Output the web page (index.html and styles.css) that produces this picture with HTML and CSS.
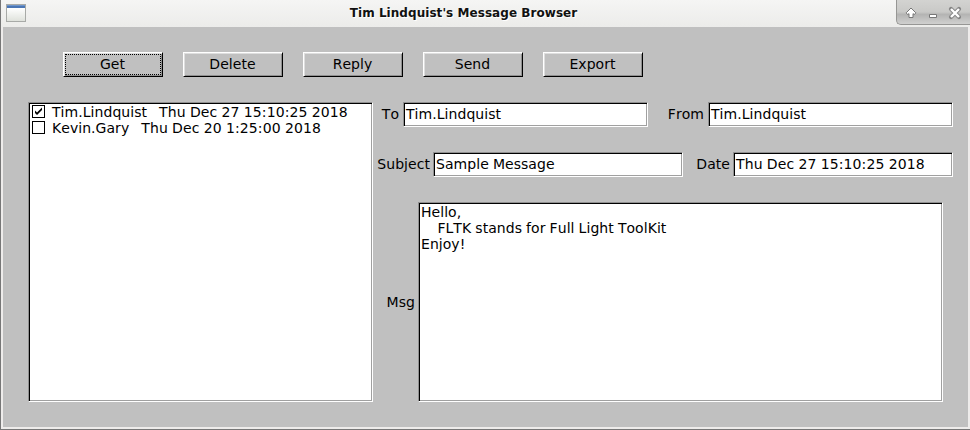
FILE: index.html
```
<!DOCTYPE html>
<html lang="en">
<head>
<meta charset="utf-8">
<title>Tim Lindquist's Message Browser</title>
<link rel="stylesheet" href="styles.css">
</head>
<body>
<div class="window">
  <header class="titlebar">
    <span class="app-icon"></span>
    <h1 class="title">Tim Lindquist's Message Browser</h1>
    <div class="controls">
      <svg width="74" height="25" viewBox="0 0 74 25" stroke-linejoin="round">
        <path d="M15 8l4.800 4.800-1.300 1.700-1.500-.8v3.800h-4v-3.800l-1.500.8-1.300-1.700z" fill="#fff" stroke="#777" stroke-width="1"/>
        <path d="M33.500 14.500h7v3h-7z" fill="#fff" stroke="#777" stroke-width="1"/>
        <path d="M55 9l8 8M63 9l-8 8" fill="none" stroke="#858585" stroke-width="4.200" stroke-linecap="round"/>
        <path d="M55 9l8 8M63 9l-8 8" fill="none" stroke="#fff" stroke-width="2.400"/>
      </svg>
    </div>
  </header>
  <main class="client">
    <nav class="toolbar">
      <button class="btn focused">Get</button>
      <button class="btn">Delete</button>
      <button class="btn">Reply</button>
      <button class="btn">Send</button>
      <button class="btn">Export</button>
    </nav>
    <div class="content">
      <ul class="sunken list">
        <li><span class="check"><svg width="11" height="11" viewBox="0 0 11 11"><path d="M2 4.500v2.500l2 2 5-5V1.500L4 6.500z" fill="#000"/></svg></span><span class="sender">Tim.Lindquist</span><span class="stamp">Thu Dec 27 15:10:25 2018</span></li>
        <li><span class="check"></span><span class="sender">Kevin.Gary</span><span class="stamp">Thu Dec 20 1:25:00 2018</span></li>
      </ul>
      <div class="details">
        <div class="row">
          <span class="label label-to">To</span><div class="sunken field field-person">Tim.Lindquist</div>
          <span class="label label-from">From</span><div class="sunken field field-person">Tim.Lindquist</div>
        </div>
        <div class="row">
          <span class="label label-subject">Subject</span><div class="sunken field field-subject">Sample Message</div>
          <span class="label label-date">Date</span><div class="sunken field field-date stamp">Thu Dec 27 15:10:25 2018</div>
        </div>
        <div class="row">
          <span class="label label-msg">Msg</span>
          <div class="sunken message">Hello,
    FLTK stands for Full Light ToolKit
Enjoy!</div>
        </div>
      </div>
    </div>
  </main>
</div>
</body>
</html>
```
FILE: styles.css
```
* { box-sizing: border-box; }
body { margin: 0; font: 14px/16px "DejaVu Sans", sans-serif; color: #000; font-kerning: none; letter-spacing: 0.05px; word-spacing: -0.4px; }
.window {
  width: 970px; height: 430px; overflow: hidden;
  display: flex; flex-direction: column;
  background: #eeeceb;
  border-left: 1px solid #777;
  border-bottom: 1px solid #777;
}
.titlebar {
  height: 27px; flex: none; display: flex; align-items: flex-start;
  background: linear-gradient(#f5f5f4, #ececea);
}
.app-icon {
  width: 20px; height: 18px; margin: 4px 0 0 5px; flex: none;
  border: 1px solid #a8aaa7;
  background: linear-gradient(#7096cb 0 1px, #4a76b5 1px 3px, #fff 3px, #dfe2dc);
}
.title {
  margin: 5px 0 0; flex: 1; padding-left: 5px;
  font-size: 12px; line-height: 16px; font-weight: bold;
  text-align: center; color: #111; text-shadow: 1px 1px #fff;
  word-spacing: 0;
}
.controls {
  width: 74px; height: 25px; flex: none;
  background: linear-gradient(#d3d3d1, #c9c9c7 50%, #b4b4b3 60%, #d0d0cf);
  border-left: 1px solid #969694; border-bottom: 1px solid #969694;
  border-bottom-left-radius: 5px;
}
.controls svg { display: block; margin-left: -1px; }
.client { height: 400px; width: 965px; margin-left: 2px; padding: 25px 0 0 25px; background: #c0c0c0; }
.toolbar { display: flex; gap: 20px; padding-left: 35px; }
.btn {
  width: 100px; height: 25px; padding: 0 1px 2px 0; font: inherit; color: #000;
  letter-spacing: inherit;
  background: #c0c0c0; border: 1px solid; border-color: #fff #000 #000 #fff;
  box-shadow: inset 1px 1px #dedede, inset -1px -1px #909090;
}
.focused { outline: 1px dotted #000; outline-offset: -3px; }
.content { display: flex; margin-top: 25px; }
.sunken {
  background: #fff; border: 1px solid; border-color: #909090 #fff #fff #909090;
  box-shadow: inset 1px 1px #000, inset -1px -1px #a0a0a0;
}
.list { width: 345px; height: 300px; margin: 0; padding: 1px 3px; list-style: none; }
.list li { display: flex; height: 16px; align-items: flex-start; white-space: pre; }
.check { width: 13px; height: 13px; margin: 1px 7px 0 0; border: 1px solid #000; flex: none; }
.check svg { display: block; }
.sender { margin-right: 12px; }
.stamp { letter-spacing: 0.12px; }
.details { display: flex; flex-direction: column; gap: 25px; }
.row { display: flex; align-items: center; }
.label { text-align: right; padding: 0 3px 1px 0; flex: none; white-space: nowrap; }
.label-to { width: 30px; padding-right: 4px; }
.label-from { width: 60px; padding-right: 4px; }
.label-subject { width: 60px; }
.label-date { width: 50px; }
.label-msg { width: 45px; }
.field { height: 25px; padding: 3px 0 0 2px; line-height: 16px; white-space: nowrap; }
.field-person { width: 245px; }
.field-subject { width: 250px; }
.field-date { width: 220px; }
.message { width: 525px; height: 200px; padding: 1px 2px; white-space: pre; }
```
